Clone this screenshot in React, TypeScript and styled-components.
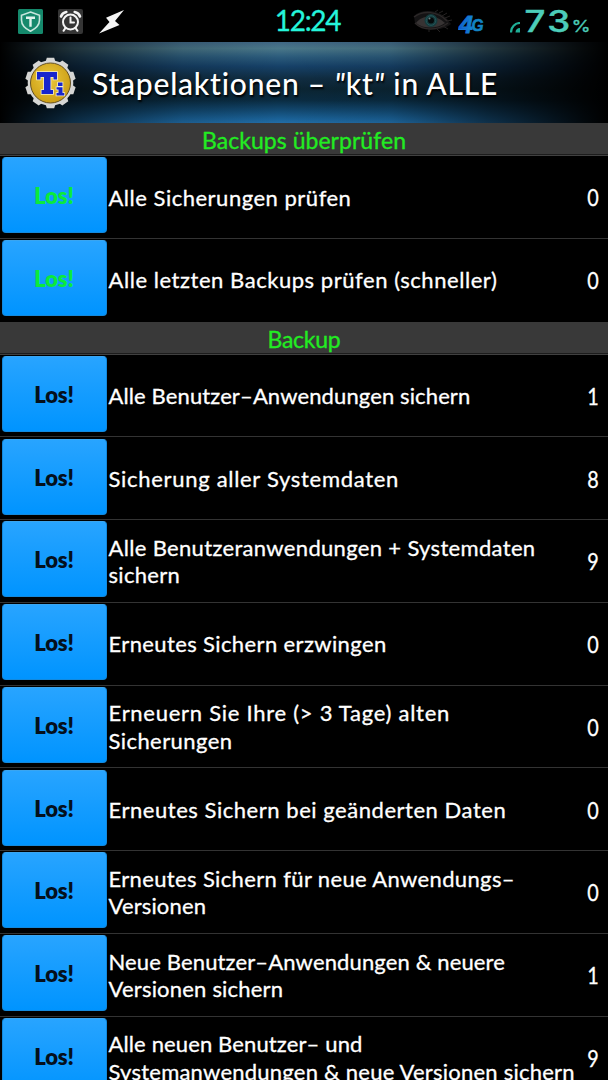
import React from 'react';
import styled, { createGlobalStyle } from 'styled-components';

const GlobalStyle = createGlobalStyle`
  html, body { margin: 0; background: #000; }
  body { overflow: hidden; font-family: Lato, 'Noto Sans', sans-serif; }
`;

const Screen = styled.main`
  display: flex;
  flex-direction: column;
  width: 608px;
  height: 1080px;
  overflow: hidden;
  background: #000;
  color: #fff;
`;

const StatusBar = styled.header`
  flex: none;
  display: grid;
  grid-template-columns: 1fr auto 1fr;
  align-items: center;
  height: 42px;
`;

const StatusGroup = styled.div<{ $end?: boolean }>`
  display: flex;
  align-items: center;
  justify-content: ${p => (p.$end ? 'flex-end' : 'flex-start')};
  height: 42px;
  padding: ${p => (p.$end ? '0 14px 0 0' : '0 0 0 18px')};
  svg { display: block; flex: none; }
`;

const NotificationIcons = styled.div`
  display: flex;
  align-items: center;
  gap: 15px;
`;

const NetworkSlot = styled.span`
  margin: 10px 22px 0 5px;
`;

const SignalSlot = styled.span`
  margin: 12px 3px 0 2px;
`;

const Clock = styled.time`
  padding: 0 0 1px 7px;
  font-size: 28px;
  line-height: 41px;
  letter-spacing: -1.3px;
  color: #25f5dc;
  -webkit-text-stroke: 0.3px #25f5dc;
`;

const TitleBar = styled.div`
  flex: none;
  display: flex;
  align-items: center;
  box-sizing: border-box;
  height: 81px;
  padding-left: 24px;
  background:
    linear-gradient(90deg, #000 0%, rgba(0, 0, 0, .58) 12%, rgba(0, 0, 0, .15) 30%, rgba(0, 0, 0, 0) 46%, rgba(0, 0, 0, .1) 64%, rgba(0, 0, 0, .55) 80%, rgba(0, 0, 0, .92) 96%, #000 100%),
    linear-gradient(180deg, #3f6684 0%, #4a7789 8%, #2c5c7c 18%, #164168 30%, #102d42 45%, #0b2533 58%, #0a2c42 72%, #134c76 86%, #1b649b 96%, #236da6 100%);
  svg { display: block; flex: none; }
`;

const Title = styled.h1`
  margin: 1px 0 0 15px;
  font-size: 30px;
  font-weight: 500;
  line-height: 36px;
  letter-spacing: 0.78px;
  white-space: nowrap;
  text-shadow: 1px 2px 2px #000;
`;

const Quote = styled.span`
  font-style: italic;
`;

const SectionHeader = styled.h2<{ $track: number }>`
  flex: none;
  box-sizing: border-box;
  height: 33px;
  margin: 0;
  border-bottom: 1px solid #414141;
  background: linear-gradient(#393939 0 31px, #1c1c1c 31px);
  color: #22ec22;
  font-size: 23px;
  font-weight: 400;
  line-height: 34px;
  letter-spacing: ${p => p.$track}px;
  text-align: center;
  -webkit-text-stroke: 0.3px #22ec22;
`;

const Rows = styled.ul`
  flex: none;
  margin: 0;
  padding: 0;
  list-style: none;
`;

const Row = styled.li<{ $last?: boolean }>`
  display: flex;
  align-items: center;
  box-sizing: border-box;
  height: 82.75px;
  border-bottom: 1px solid ${p => (p.$last ? '#000' : '#333')};
`;

const GoButton = styled.button<{ $green?: boolean }>`
  flex: none;
  align-self: flex-start;
  width: 105px;
  height: 76px;
  margin: 1.4px 2px 0 1.5px;
  padding: 1px 0 0;
  border: 1px solid #1389dd;
  border-top-color: #3aa5f0;
  border-radius: 4px;
  background: linear-gradient(#28a4ff, #0094ff);
  color: ${p => (p.$green ? '#0bea3c' : '#04101c')};
  font: 800 22px Lato, sans-serif;
  letter-spacing: -0.2px;
`;

const Label = styled.div`
  flex: 1;
  font-size: 22px;
  line-height: 27.6px;
  padding-top: 1px;
  white-space: nowrap;
  -webkit-text-stroke: 0.3px #fff;
`;

const LabelLine = styled.span<{ $track: number }>`
  display: block;
  letter-spacing: ${p => p.$track}px;
`;

const Count = styled.span`
  flex: none;
  width: 14px;
  margin-right: 8.5px;
  padding-top: 2px;
  font-size: 22.5px;
  text-align: center;
  transform: scaleX(.88);
  -webkit-text-stroke: 0.3px #fff;
`;

type Line = [text: string, track: number];
type Action = { lines: Line[]; count: number };

const checks: Action[] = [
  { lines: [['Alle Sicherungen prüfen', 0.51]], count: 0 },
  { lines: [['Alle letzten Backups prüfen (schneller)', 0.55]], count: 0 },
];

const backups: Action[] = [
  { lines: [['Alle Benutzer–Anwendungen sichern', 0.12]], count: 1 },
  { lines: [['Sicherung aller Systemdaten', 0.7]], count: 8 },
  { lines: [['Alle Benutzeranwendungen + Systemdaten', 0.33], ['sichern', 0.3]], count: 9 },
  { lines: [['Erneutes Sichern erzwingen', 0.38]], count: 0 },
  { lines: [['Erneuern Sie Ihre (> 3 Tage) alten', 0.73], ['Sicherungen', 0.43]], count: 0 },
  { lines: [['Erneutes Sichern bei geänderten Daten', 0.54]], count: 0 },
  { lines: [['Erneutes Sichern für neue Anwendungs–', 0.36], ['Versionen', 0.15]], count: 0 },
  { lines: [['Neue Benutzer–Anwendungen & neuere', 0.14], ['Versionen sichern', 0.2]], count: 1 },
  { lines: [['Alle neuen Benutzer– und', 0.13], ['Systemanwendungen & neue Versionen sichern', 0.23]], count: 9 },
];

const ShieldIcon = () => (
  <svg width="25" height="25" viewBox="0 0 25 25">
    <rect width="25" height="25" rx="1.5" fill="#15896c" />
    <path d="M12.5 3 21.5 6.2V11c0 5.2-4 8.8-9 11.2C7.5 19.8 3.5 16.2 3.5 11V6.2Z" fill="none" stroke="#c6e6dd" strokeWidth="1.6" />
    <path d="M8 8.7h9M12.5 8.7v9" stroke="#dff3ed" strokeWidth="2.4" />
  </svg>
);

const AlarmIcon = () => (
  <svg width="25" height="25" viewBox="0 0 25 25">
    <rect width="25" height="25" rx="2" fill="#353535" />
    <g fill="none" stroke="#f4f4f4" strokeWidth="2" strokeLinecap="round">
      <circle cx="12.5" cy="13" r="7.5" />
      <path d="M12.5 8.5V13.5H16M7.5 19 5.5 21.8M17.5 19l2 2.8" />
      <path d="M3 7.5C3.8 5.2 5.7 3.5 8.3 3M22 7.5C21.2 5.2 19.3 3.5 16.7 3" strokeWidth="2.6" />
    </g>
  </svg>
);

const BoltIcon = () => (
  <svg width="27" height="25" viewBox="0 0 27 25">
    <path d="M26 1 8 8.8 11.5 13 1 24.5 21.5 16 17 12Z" fill="#f5f5f5" />
  </svg>
);

const EyeIcon = () => (
  <svg width="40" height="24" viewBox="0 0 40 24">
    <path d="M1 7C8 0 25 0 34 10L38 15C30 22 11 23 2 14Z" fill="#141314" />
    <path d="M3 14C9 6 22 5 32 14C24 20 10 20 3 14Z" fill="#373333" />
    <path d="M1 8C10 1 25 2 34 12M2 14C10 22 24 22 35 14" fill="none" stroke="#2c2828" strokeWidth="1.5" />
    <path d="M22 3l3-2M26 4l4-2M29 7l5-3M32 9l5-2M34 12l5-1M30 17l5 3M24 20l3 3M16 20v3" stroke="#252222" strokeWidth="1" />
    <circle cx="18" cy="11.5" r="6.5" fill="#163a3c" />
    <circle cx="18" cy="11.5" r="4.8" fill="none" stroke="#235457" strokeWidth="1" />
    <circle cx="18" cy="11.5" r="3" fill="#050a0b" />
    <circle cx="16.5" cy="9.5" r="1" fill="#6a7e80" />
  </svg>
);

const NetworkIcon = () => (
  <svg width="28" height="26" viewBox="0 0 28 26">
    <defs>
      <linearGradient id="net" x1="0" y1="0" x2="1" y2="0">
        <stop offset="0" stopColor="#1055cf" />
        <stop offset="1" stopColor="#128fd0" />
      </linearGradient>
    </defs>
    <text x="1" y="20" textLength="14" lengthAdjust="spacingAndGlyphs" fill="url(#net)" stroke="#1674d4" strokeWidth=".8" fontFamily="Liberation Sans, sans-serif" fontSize="23" fontWeight="700" fontStyle="italic">4</text>
    <text x="13.5" y="18" textLength="12" lengthAdjust="spacingAndGlyphs" fill="#1284c4" stroke="#1284c4" strokeWidth=".6" fontFamily="Liberation Sans, sans-serif" fontSize="16" fontWeight="700" fontStyle="italic">G</text>
  </svg>
);

const SignalIcon = () => (
  <svg width="11" height="11" viewBox="0 0 11 11">
    <path d="M1 10.500C1 5 5 1 10 1" fill="none" stroke="#1fae96" strokeWidth="2.200" />
    <path d="M5.500 10.500c0-2.800 1.700-4.500 4.500-4.500v4.500Z" fill="#1fae96" />
  </svg>
);

const BatteryLevel = () => (
  <svg width="70" height="42" viewBox="0 0 70 42">
    <g fill="#4ccdb9" stroke="#4ccdb9" fontFamily="Inter, sans-serif">
      <g transform="translate(0.500 31.500) scale(1.220 1)" strokeWidth=".5">
        <text fontSize="30" fontWeight="500" letterSpacing="2">73</text>
      </g>
      <g transform="translate(47.500 31.500) scale(1.220 1)" strokeWidth=".3">
        <text fontSize="16">%</text>
      </g>
    </g>
  </svg>
);

const gear = Array.from({ length: 10 }, (_, i) => i * 36);

const AppLogo = () => (
  <svg width="53" height="52" viewBox="0 0 53 52">
    <defs>
      <radialGradient id="gold" cx=".45" cy=".4" r=".65">
        <stop offset="0" stopColor="#ecca3e" />
        <stop offset="1" stopColor="#c99a12" />
      </radialGradient>
    </defs>
    <g fill="#d6d6d4">
      {gear.map(a => <path key={a} d="M21.5 5 22.8 .8H30.2L31.5 5Z" transform={`rotate(${a} 26.5 26)`} />)}
      <circle cx="26.5" cy="26" r="22.800" />
    </g>
    <circle cx="26.5" cy="26" r="20" fill="url(#gold)" stroke="#655124" strokeWidth="1" />
    <g fill="#1725cd" stroke="#f3edcc" strokeWidth="1.6" paintOrder="stroke">
      <path d="M13 15H33V22.5H29.5V20H26.5V33H29V37H17.5V33H20V20H16.5V22.5H13Z" />
      <path d="M34 25.5h4.5v3.5H34ZM32.5 30.2h6V36h1.8v2.5H32.5V36h2v-3.500h-2Z" />
    </g>
  </svg>
);

const ActionList = ({ actions, green }: { actions: Action[]; green?: boolean }) => (
  <Rows>
    {actions.map((action, i) => (
      <Row key={action.lines[0][0]} $last={green && i === actions.length - 1}>
        <GoButton $green={green}>Los!</GoButton>
        <Label>
          {action.lines.map(([text, track]) => <LabelLine key={text} $track={track}>{text}</LabelLine>)}
        </Label>
        <Count>{action.count}</Count>
      </Row>
    ))}
  </Rows>
);

export default function App() {
  return (
    <>
      <GlobalStyle />
      <Screen>
        <StatusBar>
          <StatusGroup>
            <NotificationIcons><ShieldIcon /><AlarmIcon /><BoltIcon /></NotificationIcons>
          </StatusGroup>
          <Clock>12:24</Clock>
          <StatusGroup $end>
            <EyeIcon />
            <NetworkSlot><NetworkIcon /></NetworkSlot>
            <SignalSlot><SignalIcon /></SignalSlot>
            <BatteryLevel />
          </StatusGroup>
        </StatusBar>
        <TitleBar>
          <AppLogo />
          <Title>Stapelaktionen – <Quote>"</Quote>kt<Quote>"</Quote> in ALLE</Title>
        </TitleBar>
        <SectionHeader $track={0.04}>Backups überprüfen</SectionHeader>
        <ActionList actions={checks} green />
        <SectionHeader $track={-0.25}>Backup</SectionHeader>
        <ActionList actions={backups} />
      </Screen>
    </>
  );
}
